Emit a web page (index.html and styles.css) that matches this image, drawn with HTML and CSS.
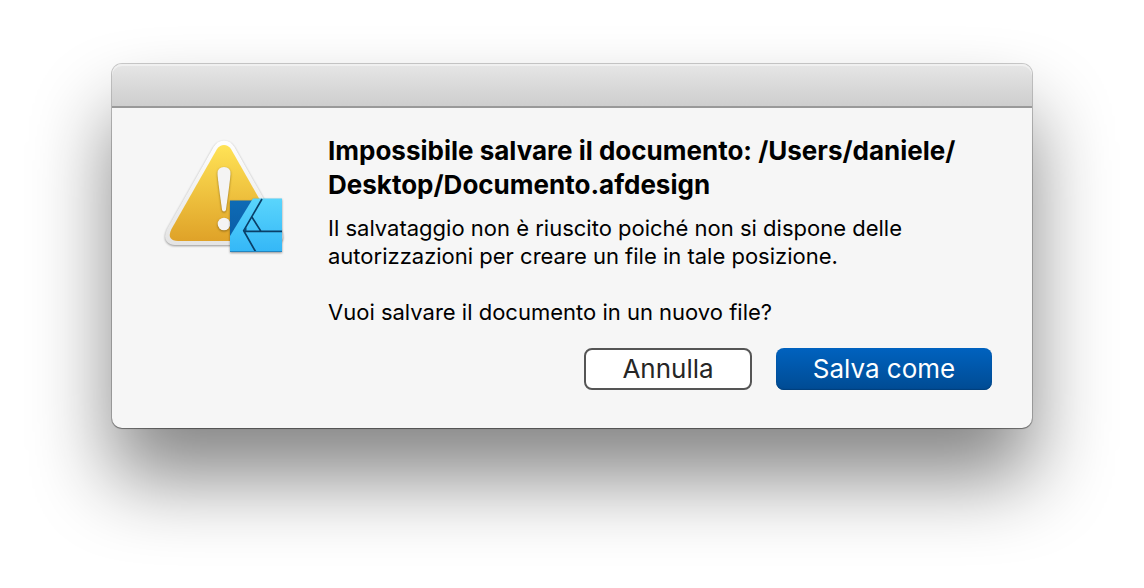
FILE: index.html
```html
<!DOCTYPE html>
<html lang="it">
<head>
  <meta charset="UTF-8">
  <title>Impossibile salvare il documento</title>
  <link rel="stylesheet" href="styles.css">
</head>
<body>

  <div class="dialog" role="alertdialog" aria-labelledby="title" aria-describedby="message">
    <div class="titlebar"></div>
    <div class="content">
      <svg class="icon" viewBox="0 0 128 128" aria-hidden="true">
        <defs>
          <linearGradient id="yellow" x1="0" y1="0" x2="0" y2="1">
            <stop offset="0" stop-color="#ffe356"/>
            <stop offset="1" stop-color="#dfa228"/>
          </linearGradient>
          <linearGradient id="rim" x1="0" y1="0" x2="0" y2="1">
            <stop offset="0" stop-color="#fefefe"/>
            <stop offset="1" stop-color="#e4e4e4"/>
          </linearGradient>
          <linearGradient id="sky" x1="0" y1="0" x2="0" y2="1">
            <stop offset="0" stop-color="#5ad5fc"/>
            <stop offset="1" stop-color="#34b7f7"/>
          </linearGradient>
          <linearGradient id="navy" x1="0" y1="0" x2="0" y2="1">
            <stop offset="0" stop-color="#0e6bb5"/>
            <stop offset="1" stop-color="#0a5ca6"/>
          </linearGradient>
        </defs>

        <!-- warning triangle -->
        <g class="icon-shadow">
          <path fill="url(#rim)" d="M53.500 11Q57.500 4.500 64 4.500T74.500 11L121 93Q125 101 121.500 105T113 109H15Q9.500 109 6.500 105T7 93Z"/>
        </g>
        <path fill="url(#yellow)" d="M57 13Q60 9 64 9T71 13L116.500 93Q119.500 99 117.500 102T110 105H18Q12.500 105 10.500 102T11.500 93Z"/>
        <g class="mark-shadow" fill="#f4f4f4">
          <path d="M57.500 37.500Q57.500 31 64 31T70.500 37.500Q70.500 42 66 73.500Q65.700 75.500 64 75.500T62 73.500Q57.500 42 57.500 37.500Z"/>
          <circle cx="64" cy="88" r="6.300"/>
        </g>

        <!-- app badge -->
        <g class="icon-shadow">
          <path fill="url(#navy)" d="M70 64.500H94V106H70Z"/>
          <path fill="url(#sky)" d="M93 62.500H122V116H70V100L91.700 64.500Z"/>
        </g>
        <path fill="none" stroke="#0a3f68" stroke-width="1.700" d="M102 63L83.700 94.700L95.500 115.500M84 95.400H122M91.700 80.700L101 95.400"/>
        <path fill="#0b4b78" d="M83.500 94L86.500 91.500V95.500Z"/>
        <path fill="none" stroke="#2485c0" stroke-width="1" d="M70 115.500H122"/>
      </svg>

      <div class="text">
        <h1 id="title">Impossibile salvare il documento: /Users/daniele/<wbr>Desktop/Documento.afdesign</h1>
        <div id="message">
          <p>Il salvataggio non è riuscito poiché non si dispone delle autorizzazioni per creare un file in tale posizione.</p>
          <p>Vuoi salvare il documento in un nuovo file?</p>
        </div>
        <div class="buttons">
          <button type="button" class="cancel">Annulla</button>
          <button type="button" class="save">Salva come</button>
        </div>
      </div>
    </div>
  </div>

</body>
</html>
```
FILE: styles.css
```css
body {
  min-height: 100vh;
  margin: 0;
  padding: 64px 112px;
  box-sizing: border-box;
  background: #fff;
  color: #000;
  font-family: Inter, sans-serif;
}
.dialog {
  background: #f6f6f6;
  border-radius: 10px;
  box-shadow: 0 0 0 1px rgba(0,0,0,0.2), 0 1px 1px rgba(0,0,0,0.3), 0 50px 80px rgba(0,0,0,0.48);
}
.titlebar {
  height: 44px;
  box-sizing: border-box;
  border-bottom: 2px solid #999;
  border-radius: 10px 10px 0 0;
  background: linear-gradient(#e6e6e6, #cecece);
  box-shadow: inset 0 2px 0 #f0f0f0;
}
.content {
  display: flex;
  gap: 40px;
  padding: 26px 40px 38px 48px;
}
.icon {
  flex: none;
  width: 128px;
  height: 128px;
  margin-top: 2px;
}
.icon-shadow {
  filter: drop-shadow(0 1px 1px rgba(0,0,0,0.4));
}
.mark-shadow {
  filter: drop-shadow(0 1px 1px rgba(90,60,0,0.6));
}
.text {
  flex: 1;
}
h1 {
  margin: 0 0 12px;
  font-size: 26px;
  font-weight: 700;
  line-height: 34px;
}
p {
  margin: 0 0 28px;
  font-size: 22px;
  line-height: 28px;
}
p:last-child {
  margin-bottom: 22px;
}
.buttons {
  display: flex;
  justify-content: flex-end;
  gap: 24px;
}
button {
  height: 42px;
  padding: 0;
  border-radius: 8px;
  font-family: inherit;
  font-size: 26px;
  line-height: 38px;
}
.cancel {
  width: 168px;
  border: 2px solid #555;
  background: #fff;
  color: #262626;
}
.save {
  width: 216px;
  border: 0;
  background: linear-gradient(#0062bf, #004b93);
  box-shadow: inset 0 -1px 1px #00407d;
  color: #fff;
}
```
